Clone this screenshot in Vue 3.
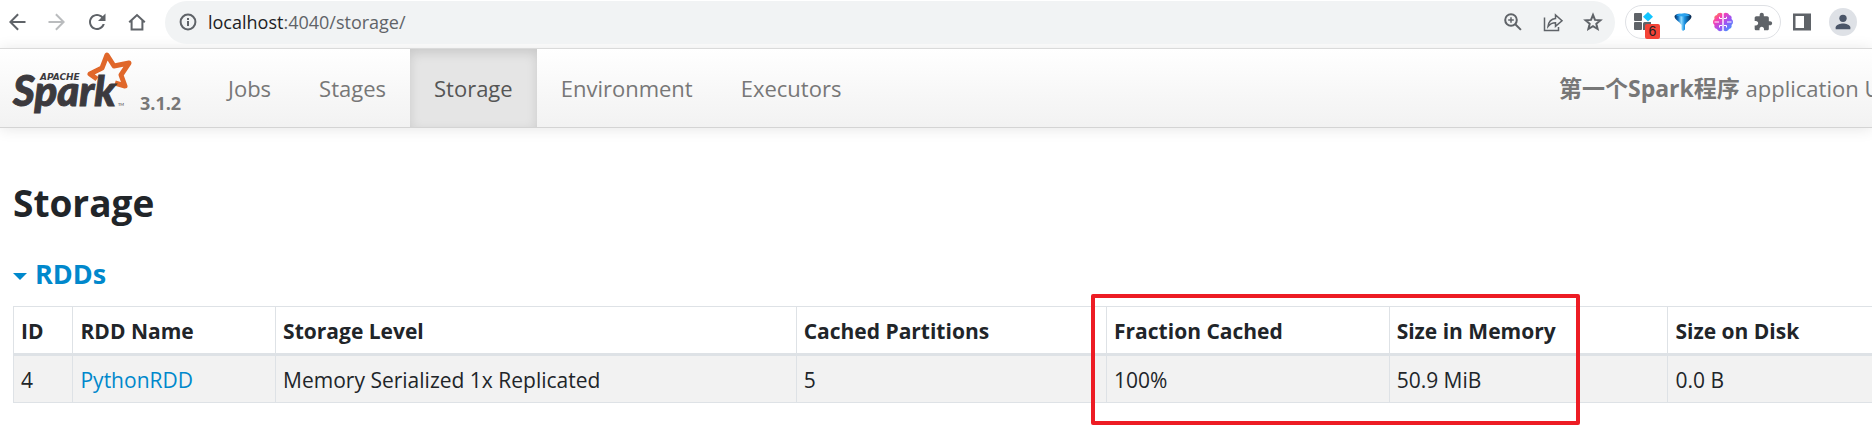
<script setup>
const tabs = ['Jobs', 'Stages', 'Storage', 'Environment', 'Executors']
const activeTab = 'Storage'
const columns = [
  { key: 'id', label: 'ID' },
  { key: 'name', label: 'RDD Name' },
  { key: 'level', label: 'Storage Level' },
  { key: 'partitions', label: 'Cached Partitions' },
  { key: 'fraction', label: 'Fraction Cached' },
  { key: 'memory', label: 'Size in Memory' },
  { key: 'disk', label: 'Size on Disk' },
]
const rdds = [
  { id: '4', name: 'PythonRDD', level: 'Memory Serialized 1x Replicated', partitions: '5', fraction: '100%', memory: '50.9 MiB', disk: '0.0 B' },
]
</script>

<template>
  <div class="page">
    <header class="toolbar">
      <div class="history">
        <button class="tool" aria-label="Back">
          <svg class="icon" viewBox="0 0 24 24"><path d="M20.5 11H7.83l6-6L12.4 3.6 4 12l8.4 8.4 1.43-1.4-6-6H20.5z" /></svg>
        </button>
        <button class="tool disabled" aria-label="Forward">
          <svg class="icon" viewBox="0 0 24 24"><path d="M3.5 11h12.67l-6-6 1.43-1.4L20 12l-8.4 8.4-1.43-1.4 6-6H3.5z" /></svg>
        </button>
        <button class="tool" aria-label="Reload">
          <svg class="icon" viewBox="0 0 24 24"><path d="M17.65 6.35C16.2 4.9 14.21 4 12 4c-4.42 0-7.99 3.58-7.99 8s3.57 8 7.99 8c3.73 0 6.84-2.55 7.73-6h-2.08c-.82 2.33-3.04 4-5.65 4-3.31 0-6-2.69-6-6s2.69-6 6-6c1.66 0 3.14.69 4.22 1.78L13 11h7.500V3.500z" /></svg>
        </button>
        <button class="tool" aria-label="Home">
          <svg class="icon line" viewBox="0 0 24 24"><path d="M4.2 12.2 12 5l7.8 7.2M6.6 10.5v9h10.8v-9" /></svg>
        </button>
      </div>

      <div class="address">
        <button class="tool" aria-label="Site information">
          <svg class="icon line" viewBox="0 0 24 24"><circle cx="12" cy="12" r="7.4" /><path d="M12 11v5M12 8v2" /></svg>
        </button>
        <div class="url"><span class="host">localhost</span>:4040/storage/</div>
        <div class="address-actions">
          <button class="tool" aria-label="Zoom">
            <svg class="icon line" viewBox="0 0 24 24"><circle cx="10" cy="10" r="5.8" /><path d="m14.3 14.3 5.6 5.6" /><path class="thin" d="M7.2 10h5.6M10 7.2v5.6" /></svg>
          </button>
          <button class="tool" aria-label="Share">
            <svg class="icon line thin" viewBox="0 0 24 24"><path d="M3.5 7.500v13h14V17M7 16.500c.6-5 3.500-7.600 7.500-8V5l6.500 5.700-6.500 5.600v-3.500c-3.300 0-5.500 1.200-7.500 3.700z" /></svg>
          </button>
          <button class="tool" aria-label="Bookmark">
            <svg class="icon line" viewBox="0 0 24 24"><path d="m12 5 2 4.900 5.400.4-4.100 3.500 1.300 5.200L12 16.200 7.400 19l1.300-5.200-4.100-3.500 5.400-.4z" /></svg>
          </button>
        </div>
      </div>

      <div class="extensions">
        <button class="tool" aria-label="Blocks, 6 notifications">
          <svg class="icon" viewBox="0 0 24 24"><rect x="3" y="3" width="8" height="8" rx="1" /><rect x="3" y="12" width="8" height="8" rx="1" /><path d="M12 20v-6.500a1.500 1.500 0 0 1 1.500-1.500H20v8z" /><path class="cyan" d="m17 2 5 4.700-5 4.800-5-4.800z" /></svg>
          <span class="badge">6</span>
        </button>
        <button class="tool" aria-label="Funnel">
          <svg class="icon" viewBox="0 0 24 24">
            <defs>
              <linearGradient id="funnel"><stop offset="0" stop-color="#0a2c55" /><stop offset=".2" stop-color="#0c6fc2" /><stop offset=".4" stop-color="#8edbff" /><stop offset=".6" stop-color="#168ee0" /><stop offset="1" stop-color="#061f42" /></linearGradient>
            </defs>
            <path fill="url(#funnel)" d="M3.500 6.500C4 2.300 20 2.300 20.500 6.500c0 3-5 5.500-6.500 8.500v4.500L12 21l-1.500-1.500V15C9 12 3.500 9.500 3.500 6.500z" />
            <ellipse cx="12" cy="5.200" rx="6.500" ry="1.300" fill="#2aa2ee" />
          </svg>
        </button>
        <button class="tool" aria-label="Brain">
          <svg class="icon" viewBox="0 0 24 24">
            <defs>
              <linearGradient id="brain" x2="1" y2="1"><stop offset="0" stop-color="#ff9a2a" /><stop offset=".3" stop-color="#f83cb4" /><stop offset=".6" stop-color="#9a55f6" /><stop offset="1" stop-color="#25a8ff" /></linearGradient>
            </defs>
            <path fill="url(#brain)" d="M11.300 3.500v17c-2 1.300-4.500.8-5.200-1.400-2.300-.3-3.300-2.300-2.600-4-2-1.500-2-4.500 0-6C2.800 7 4 5.200 5.900 5c.7-2.300 3.700-3 5.400-1.500zM12.700 3.500c1.700-1.500 4.700-.8 5.400 1.500 1.900.2 3.100 2 2.400 4.100 2 1.500 2 4.500 0 6 .7 1.700-.3 3.700-2.600 4-.7 2.200-3.200 2.700-5.200 1.400z" />
            <path class="folds" d="M11 8.500H8.500V6.800M11 15.500H8.500v2M3.500 12H8M13 8.500h2.500V6.800M13 15.500h2.500v2M20.500 12H16" />
          </svg>
        </button>
        <button class="tool" aria-label="Extensions">
          <svg class="icon puzzle" viewBox="0 0 24 24"><path d="M20.500 11H19V7c0-1.100-.9-2-2-2h-4V3.500C13 2.120 11.880 1 10.500 1S8 2.120 8 3.500V5H4c-1.100 0-1.990.9-1.990 2v3.800H3.500c1.490 0 2.700 1.210 2.700 2.700s-1.210 2.700-2.700 2.700H2V20c0 1.100.9 2 2 2h3.800v-1.500c0-1.490 1.210-2.700 2.700-2.700s2.700 1.210 2.700 2.700V22H17c1.100 0 2-.9 2-2v-4h1.500c1.380 0 2.500-1.120 2.500-2.500S21.880 11 20.500 11z" /></svg>
        </button>
      </div>
      <button class="tool" aria-label="Side panel">
        <svg class="icon" viewBox="0 0 24 24"><path d="M3 3.500h18v17H3zM5.500 6v12H14V6z" fill-rule="evenodd" /></svg>
      </button>
      <button class="tool avatar" aria-label="Profile">
        <svg class="icon" viewBox="0 0 24 24"><circle cx="12" cy="8" r="4" /><path d="M4 20v-2.300C4 15 9.300 13.500 12 13.500s8 1.500 8 4.200V20z" /></svg>
      </button>
    </header>

    <nav class="navbar">
      <a class="brand" href="#">
        <svg class="logo" viewBox="0 0 130 70" role="img" aria-label="Apache Spark">
          <path class="star" d="m87 30-7-5 12-6 5-13 7 11 15-3-8 12 4 11-10-3" />
          <text class="logo-apache" x="30" y="31">APACHE</text>
          <text class="logo-spark" x="3" y="57">Spark</text>
          <text class="logo-tm" x="108" y="57">TM</text>
        </svg>
        <span class="version">3.1.2</span>
      </a>
      <ul class="tabs">
        <li v-for="tab in tabs" :key="tab">
          <a href="#" class="tab" :class="{ active: tab === activeTab }">{{ tab }}</a>
        </li>
      </ul>
      <p class="app-name"><strong>第一个Spark程序</strong> application UI</p>
    </nav>

    <main class="content">
      <h1 class="title">Storage</h1>
      <h2 class="section"><a href="#" class="section-link"><span class="caret"></span>RDDs</a></h2>
      <div class="table-wrap">
        <table class="rdds">
          <colgroup><col v-for="c in columns" :key="c.key" :class="'col-' + c.key"></colgroup>
          <thead>
            <tr><th v-for="c in columns" :key="c.key" scope="col">{{ c.label }}</th></tr>
          </thead>
          <tbody>
            <tr v-for="row in rdds" :key="row.id">
              <td v-for="c in columns" :key="c.key">
                <a v-if="c.key === 'name'" href="#">{{ row.name }}</a>
                <template v-else>{{ row[c.key] }}</template>
              </td>
            </tr>
          </tbody>
        </table>
        <div class="highlight"></div>
      </div>
    </main>
  </div>
</template>

<style>
body {
  margin: 0;
  background: #fff;
}
</style>

<style scoped>
.page {
  font-family: "Open Sans", "Noto Sans", "Noto Sans CJK SC", sans-serif;
  font-size: 21px;
  line-height: 30px;
  color: #212529;
  overflow: hidden;
}
a {
  color: #0088cc;
  text-decoration: none;
}

.toolbar {
  display: flex;
  align-items: center;
  height: 48px;
  padding: 0 15px 4px 5px;
  box-sizing: border-box;
}
.history {
  display: flex;
  gap: 16px;
  margin-right: 16px;
}
.tool {
  display: flex;
  align-items: center;
  justify-content: center;
  position: relative;
  flex: none;
  width: 24px;
  height: 24px;
  padding: 0;
  border: 0;
  background: none;
}
.icon {
  width: 24px;
  height: 24px;
  fill: #5f6368;
}
.disabled .icon {
  fill: #babcbe;
}
.line {
  fill: none;
  stroke: #5f6368;
  stroke-width: 2;
}
.thin {
  stroke-width: 1.5;
}
.cyan {
  fill: #12c5ff;
}
.folds {
  fill: none;
  stroke: #fff;
  stroke-width: 1;
}
.puzzle {
  width: 20px;
  height: 20px;
}
.address {
  display: flex;
  align-items: center;
  flex: 1;
  height: 43px;
  margin-right: 10px;
  padding: 0 10px 0 11px;
  border-radius: 22px;
  background: #f1f3f4;
}
.url {
  flex: 1;
  margin-left: 8px;
  font-size: 18px;
  color: #5f6368;
}
.host {
  color: #202124;
}
.address-actions {
  display: flex;
  gap: 16px;
}
.extensions {
  display: flex;
  gap: 16px;
  margin-right: 9px;
  padding: 4px 5px;
  border: 1px solid #dfe1e5;
  border-radius: 18px;
}
.badge {
  position: absolute;
  left: 14px;
  top: 14px;
  width: 15px;
  height: 15px;
  border-radius: 2px;
  background: #f44336;
  color: #202124;
  font-size: 14px;
  line-height: 15px;
  text-align: center;
}
.avatar {
  width: 28px;
  height: 28px;
  margin-left: 15px;
  border-radius: 50%;
  background: #dee1e6;
}
.avatar .icon {
  width: 22px;
  height: 22px;
  fill: #4a5568;
}

.navbar {
  display: flex;
  height: 78px;
  border-top: 1px solid #dadada;
  border-bottom: 1px solid #d4d4d4;
  background: linear-gradient(#fff, #f2f2f2);
  box-shadow: 0 1px 14px rgba(0, 0, 0, 0.1);
  white-space: nowrap;
}
.brand {
  display: flex;
  width: 204px;
  flex: none;
  padding-left: 10px;
  box-sizing: border-box;
}
.logo {
  width: 130px;
  height: 70px;
}
.logo-spark {
  font: italic 900 42px Lato, sans-serif;
  fill: #3c3a3e;
  stroke: #3c3a3e;
  stroke-width: 1;
}
.logo-apache {
  font: italic 700 9px "DejaVu Sans", sans-serif;
  fill: #3c3a3e;
}
.logo-tm {
  font: 4px Lato, sans-serif;
  fill: #3c3a3e;
}
.star {
  fill: none;
  stroke: #e0672a;
  stroke-width: 5;
  stroke-linejoin: round;
}
.version {
  padding-top: 39px;
  font-size: 18px;
  font-weight: 700;
  color: #777;
}
.tabs {
  display: flex;
  margin: 0;
  padding: 0;
  list-style: none;
}
.tab {
  display: block;
  padding: 24px;
  font-size: 22px;
  color: #777;
}
.tab.active {
  color: #555;
  background: #e5e5e5;
  box-shadow: inset 0 4px 11px rgba(0, 0, 0, 0.125);
}
.app-name {
  flex: none;
  width: 313px;
  margin: 0 0 0 auto;
  padding-top: 24px;
  font-size: 22px;
  color: #777;
}
.app-name strong {
  font-size: 23px;
}

.content {
  padding: 53px 0 48px 13px;
}
.title {
  margin: 0;
  font-size: 37px;
  line-height: 44px;
}
.section {
  margin: 33px 0 16px;
  font-size: 27px;
  line-height: 32px;
}
.section-link {
  display: flex;
  align-items: center;
  gap: 8px;
}
.caret {
  margin-top: 4px;
  border: 7px solid transparent;
  border-top-color: #0088cc;
  border-bottom: 0;
}
.table-wrap {
  position: relative;
}
.rdds {
  width: 100%;
  table-layout: fixed;
  border-spacing: 0;
  border-top: 1px solid #dee2e6;
  white-space: nowrap;
}
.rdds th,
.rdds td {
  padding: 9px 7px 7px;
  border-left: 1px solid #dee2e6;
  border-bottom: 1px solid #dee2e6;
  text-align: left;
}
.rdds th {
  border-bottom-width: 3px;
}
.rdds td {
  background: #f2f2f2;
}
.col-id {
  width: 3.2%;
}
.col-name {
  width: 10.9%;
}
.col-level {
  width: 28%;
}
.col-partitions {
  width: 16.7%;
}
.col-fraction {
  width: 15.2%;
}
.col-memory {
  width: 15%;
}
.highlight {
  position: absolute;
  left: 58%;
  top: -12px;
  bottom: -22px;
  width: 26.3%;
  box-sizing: border-box;
  border: 4px solid #ed1c24;
  border-radius: 2px;
  pointer-events: none;
}
</style>
